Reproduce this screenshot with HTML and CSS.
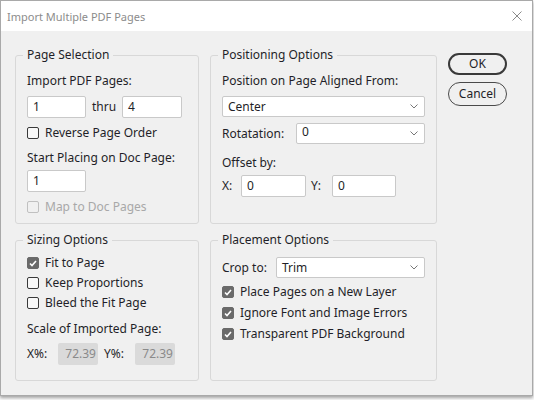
FILE: index.html
```html
<!DOCTYPE html>
<html>
<head>
<meta charset="utf-8">
<link rel="stylesheet" href="styles.css">
</head>
<body>
<div class="dialog">
  <div class="titlebar">
    <span class="title">Import Multiple PDF Pages</span>
    <svg class="close" width="10" height="10" viewBox="0 0 10 10"><path d="M0.5 0.5 L9.5 9.5 M9.5 0.5 L0.5 9.5" stroke="#8a8a8a" stroke-width="1" fill="none"/></svg>
  </div>
  <div class="content">
    <fieldset class="group">
      <legend>Page Selection</legend>
      <div class="label first">Import PDF Pages:</div>
      <div class="row range">
        <div class="field w59">1</div>
        <span class="thru">thru</span>
        <div class="field w60">4</div>
      </div>
      <div class="check m7"><span class="box"></span><span>Reverse Page Order</span></div>
      <div class="label m9">Start Placing on Doc Page:</div>
      <div class="field w59 m4">1</div>
      <div class="check m7 disabled"><span class="box"></span><span>Map to Doc Pages</span></div>
    </fieldset>

    <fieldset class="group">
      <legend>Positioning Options</legend>
      <div class="label first">Position on Page Aligned From:</div>
      <div class="select m7"><span>Center</span><svg class="chev" width="8" height="5" viewBox="0 0 8 5"><path d="M0.5 0.5 L4 4 L7.5 0.5" stroke="#777" fill="none"/></svg></div>
      <div class="row m6">
        <span class="rotlabel">Rotatation:</span>
        <div class="select grow rot"><span>0</span><svg class="chev" width="8" height="5" viewBox="0 0 8 5"><path d="M0.5 0.5 L4 4 L7.5 0.5" stroke="#777" fill="none"/></svg></div>
      </div>
      <div class="label m11">Offset by:</div>
      <div class="row m4">
        <span class="xlabel">X:</span>
        <div class="field w65">0</div>
        <span class="ylabel">Y:</span>
        <div class="field w64">0</div>
      </div>
    </fieldset>

    <div class="buttons">
      <button class="btn ok">OK</button>
      <button class="btn cancel">Cancel</button>
    </div>

    <fieldset class="group">
      <legend>Sizing Options</legend>
      <div class="check m7"><span class="box on"><svg width="8" height="7" viewBox="0 0 8 7"><path d="M1 3.5 L3 5.5 L7 1" stroke="#fff" stroke-width="1.6" fill="none"/></svg></span><span>Fit to Page</span></div>
      <div class="check m4"><span class="box"></span><span>Keep Proportions</span></div>
      <div class="check m4"><span class="box"></span><span>Bleed the Fit Page</span></div>
      <div class="label m10">Scale of Imported Page:</div>
      <div class="row m6">
        <span class="pctlabel">X%:</span>
        <div class="dfield">72.39</div>
        <span class="pctlabel y">Y%:</span>
        <div class="dfield">72.39</div>
      </div>
    </fieldset>

    <fieldset class="group">
      <legend>Placement Options</legend>
      <div class="row m9">
        <span class="croplabel">Crop to:</span>
        <div class="select grow"><span>Trim</span><svg class="chev" width="8" height="5" viewBox="0 0 8 5"><path d="M0.5 0.5 L4 4 L7.5 0.5" stroke="#777" fill="none"/></svg></div>
      </div>
      <div class="check m6"><span class="box on"><svg width="8" height="7" viewBox="0 0 8 7"><path d="M1 3.5 L3 5.5 L7 1" stroke="#fff" stroke-width="1.6" fill="none"/></svg></span><span>Place Pages on a New Layer</span></div>
      <div class="check m5"><span class="box on"><svg width="8" height="7" viewBox="0 0 8 7"><path d="M1 3.5 L3 5.5 L7 1" stroke="#fff" stroke-width="1.6" fill="none"/></svg></span><span>Ignore Font and Image Errors</span></div>
      <div class="check m5"><span class="box on"><svg width="8" height="7" viewBox="0 0 8 7"><path d="M1 3.5 L3 5.5 L7 1" stroke="#fff" stroke-width="1.6" fill="none"/></svg></span><span>Transparent PDF Background</span></div>
    </fieldset>
  </div>
</div>
</body>
</html>
```
FILE: styles.css
```css
html, body {
  margin: 0;
  padding: 0;
  background: #fbfbfb;
}
body {
  font-family: "Noto Sans", "Open Sans", sans-serif;
  font-size: 12px;
  color: #1f1f28;
  width: 534px;
  height: 400px;
  overflow: hidden;
}
.dialog {
  width: 531px;
  height: 394px;
  border: 1px solid #a9a9a9;
  background: #f0f0f0;
  box-shadow: 0 2px 3px rgba(0,0,0,0.35);
}
.titlebar {
  height: 30px;
  background: #fff;
  display: flex;
  align-items: center;
  justify-content: space-between;
  padding: 0 10px 0 6px;
}
.title {
  color: #8c8c8c;
  font-size: 11px;
  line-height: 16px;
  margin-top: 1px;
}
.close { display: block; }
.content {
  display: grid;
  grid-template-columns: 184px 227px 59px;
  grid-template-rows: 177px 149px;
  column-gap: 11px;
  row-gap: 8px;
  padding: 16px 0 0 14px;
}
.group {
  margin: 0;
  padding: 0 11px;
  border: 1px solid #d8d8d8;
  border-radius: 3px;
  min-width: 0;
  display: flex;
  flex-direction: column;
  align-items: flex-start;
}
legend {
  padding: 0 4px;
  margin-left: -4px;
  line-height: 16px;
}
.label { line-height: 16px; }
.first { margin-top: 10px; }
.m4 { margin-top: 4px; }
.m5 { margin-top: 5px; }
.m6 { margin-top: 6px; }
.m7 { margin-top: 7px; }
.m9 { margin-top: 9px; }
.m10 { margin-top: 10px; }
.m11 { margin-top: 11px; }
.row {
  display: flex;
  align-items: center;
  align-self: stretch;
}
.range { margin-top: 7px; }
.field {
  box-sizing: border-box;
  height: 22px;
  background: #fff;
  border: 1px solid #c9c9c9;
  border-radius: 2px;
  padding: 0 5px;
  line-height: 20px;
}
.w59 { width: 59px; }
.w60 { width: 60px; }
.w65 { width: 65px; }
.w64 { width: 64px; }
.thru {
  width: 36px;
  text-align: center;
  line-height: 16px;
}
.check {
  display: flex;
  align-items: center;
  line-height: 16px;
}
.box {
  box-sizing: border-box;
  width: 12px;
  height: 12px;
  border: 1px solid #3a3a3a;
  border-radius: 2px;
  background: #f8f8f8;
  margin-right: 6px;
  display: flex;
  align-items: center;
  justify-content: center;
}
.box.on {
  background: #6a6a6a;
  border-color: #6a6a6a;
}
.disabled { color: #a8a8a8; }
.disabled .box { border-color: #c0c0c0; background: #f0f0f0; }
.select {
  box-sizing: border-box;
  align-self: stretch;
  height: 21px;
  background: #fff;
  border: 1px solid #c9c9c9;
  border-radius: 2px;
  padding: 0 5px 0 5px;
  display: flex;
  align-items: center;
  justify-content: space-between;
  line-height: 16px;
}
.select.grow { flex: 1; }
.rot span { align-self: flex-start; margin-top: 0; }
.chev { display: block; margin-right: 1px; }
.rotlabel { width: 74px; line-height: 16px; }
.croplabel { width: 54px; line-height: 16px; }
.xlabel { width: 19px; line-height: 16px; }
.ylabel { width: 21px; margin-left: 5px; line-height: 16px; }
.pctlabel { width: 31px; line-height: 16px; }
.pctlabel.y { margin-left: 6px; }
.dfield {
  box-sizing: border-box;
  width: 40px;
  height: 22px;
  background: #dadada;
  border-radius: 2px;
  color: #8a8a8a;
  text-align: right;
  padding-right: 2px;
  line-height: 22px;
}
.buttons {
  grid-column: 3;
  grid-row: 1 / span 2;
  display: flex;
  flex-direction: column;
  margin-top: 6px;
}
.btn {
  font-family: inherit;
  font-size: 12px;
  color: #1f1f28;
  background: #f0f0f0;
  width: 59px;
  padding: 0;
  line-height: 16px;
}
.ok {
  height: 22px;
  border: 2px solid #3a3a3a;
  border-radius: 11px;
}
.cancel {
  height: 24px;
  margin-top: 7px;
  border: 1px solid #4a4a4a;
  border-radius: 12px;
}
```
